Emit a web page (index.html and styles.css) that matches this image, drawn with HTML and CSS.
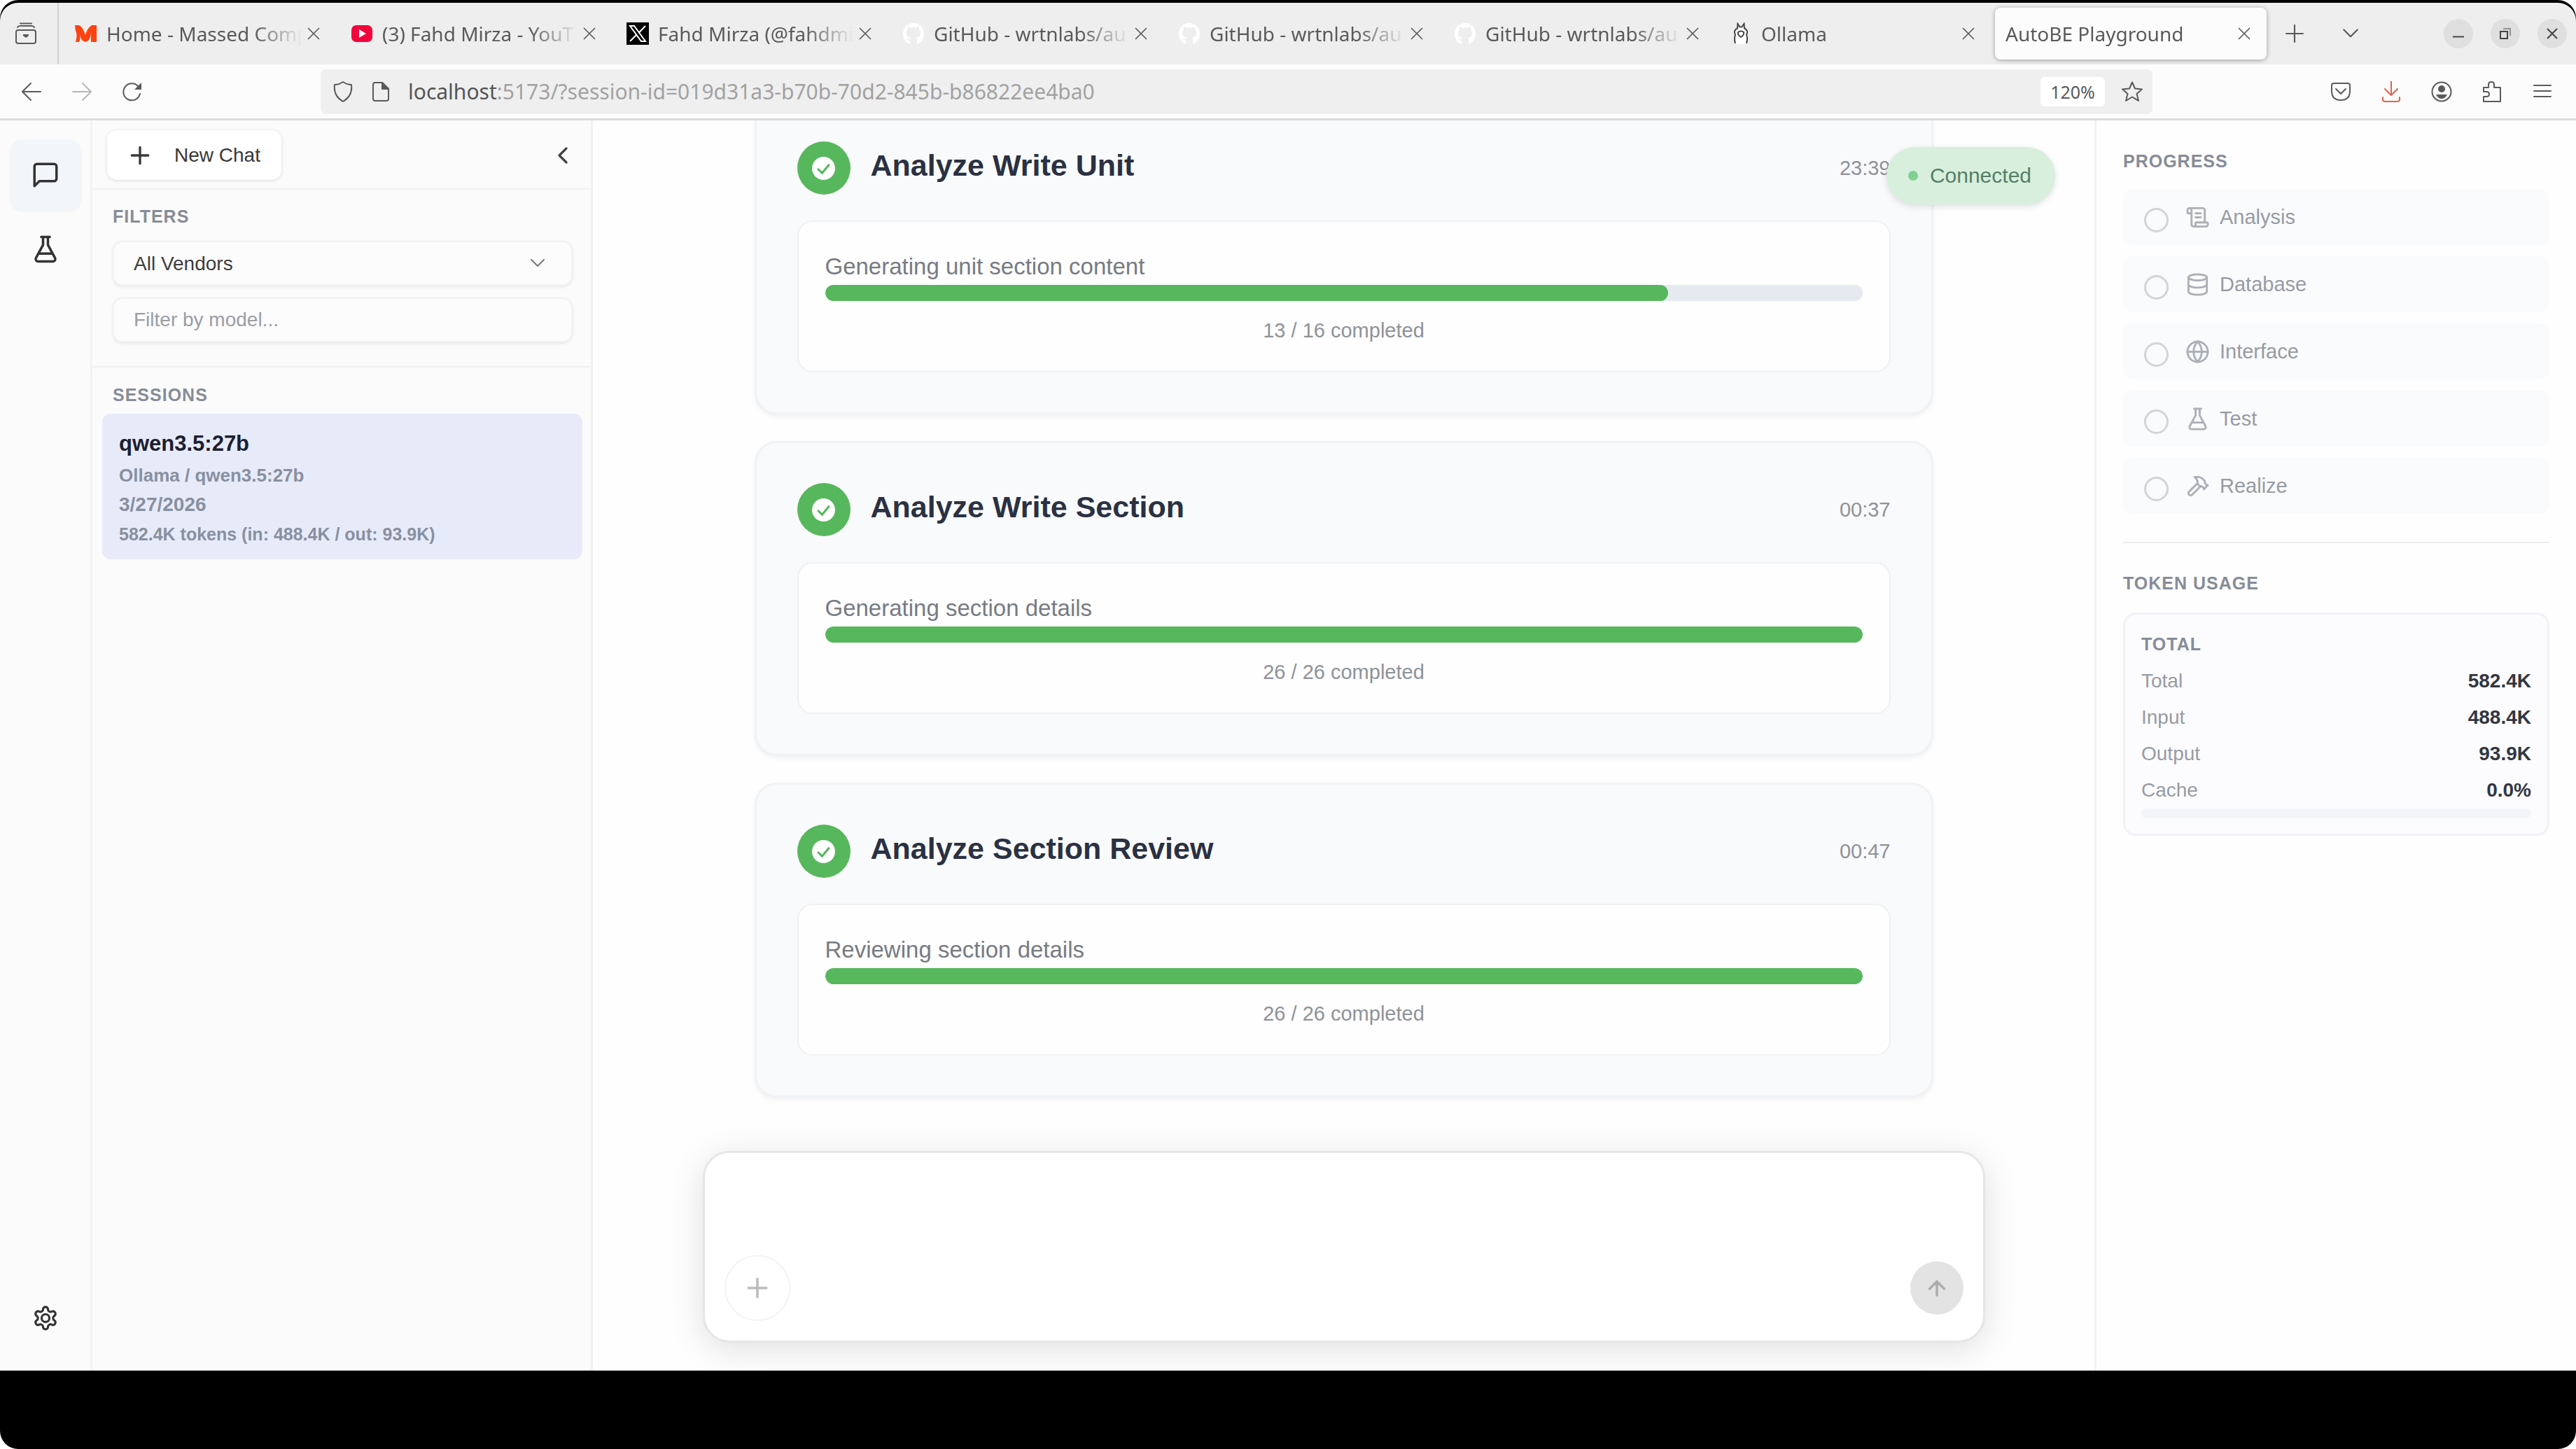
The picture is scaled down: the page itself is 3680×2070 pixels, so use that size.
FILE: index.html
```html
<!DOCTYPE html>
<html lang="en">
<head>
  <meta charset="UTF-8" />
  <meta name="viewport" content="width=device-width, initial-scale=1.0" />
  <title>AutoBE Playground</title>
  <link rel="stylesheet" href="styles.css">
</head>
<body>
  <!-- shared icons -->
  <svg class="sprite" aria-hidden="true">
    <symbol id="i-x" viewBox="0 0 24 24"><path d="M3 3l18 18M21 3L3 21" /></symbol>
    <symbol id="i-plus" viewBox="0 0 24 24"><path d="M5 12h14M12 5v14" /></symbol>
    <symbol id="i-down" viewBox="0 0 24 24"><path d="M3 7l9 9 9-9" /></symbol>
    <symbol id="i-flask" viewBox="0 0 24 24"><path d="M10 2v6.500L4.200 19.200A1.900 1.900 0 0 0 5.900 22h12.200a1.900 1.900 0 0 0 1.700-2.800L14 8.500V2M8.500 2h7M7 15.500h10" /></symbol>
    <symbol id="i-github" viewBox="0 0 32 32"><path d="M16 1C7 1 1 8 1 16.500c0 7 4 12.500 10 14.500v-5c-4 0-3-3-5-4 3 0 3 2 5 2 .5-2 1-2 1-2-4-1-6-3-6-7 0-2 1-4 2-5-.5-1-.5-3 0-4 2 0 3 1 4 2a13 13 0 0 1 8 0c1-1 2-2 4-2 .5 1 .5 3 0 4 1 1 2 3 2 5 0 4-2 6-6 7 1 1 1 2 1 4v5c6-2 10-7.500 10-14.500C31 8 25 1 16 1z" /></symbol>
    <symbol id="i-done" viewBox="0 0 32 32"><circle cx="16" cy="16" r="16" fill="#fff" /><path d="M8 16.500l6 6 10-12" fill="none" stroke="#57b75c" stroke-width="3" /></symbol>
  </svg>

  <header class="browser">
    <div class="tab-bar">
      <button class="recent" aria-label="Recent tabs">
        <svg class="icon" viewBox="0 0 32 32"><path d="M2 14a3 3 0 0 1 3-3h22a3 3 0 0 1 3 3v13a3 3 0 0 1-3 3H5a3 3 0 0 1-3-3zM4 7q1-2 4-2h16q3 0 4 2M8 1.500h16" /><path d="M12 17h8v2l-4 3-4-3z" fill="currentColor" stroke="none" /></svg>
      </button>
      <nav class="tabs">
        <div class="tab">
          <svg class="favicon" viewBox="0 0 32 32"><path d="M0 4h6q5 2 9 14 2-9 9-14h7v24h-8V15q-1 11-7 13-8-1-9-11 1 8-1 11H1q3-11 0-16z" fill="#ff4310" /></svg>
          <span class="tab-title">Home - Massed Comp</span>
          <button class="tab-close" aria-label="Close tab"><svg class="icon"><use href="#i-x" /></svg></button>
        </div>
        <div class="tab">
          <svg class="favicon" viewBox="0 0 32 32"><rect x="1" y="4" width="30" height="24" rx="7" fill="#f2033b" /><path d="M12 10l10 6-10 6z" fill="#fff" /></svg>
          <span class="tab-title">(3) Fahd Mirza - YouT</span>
          <button class="tab-close" aria-label="Close tab"><svg class="icon"><use href="#i-x" /></svg></button>
        </div>
        <div class="tab">
          <svg class="favicon" viewBox="0 0 32 32"><path d="M0 0h32v32H0z" fill="#000" /><path d="M5 5h6l16 22h-6zM27 5L17.500 15M14 18l-9 9" fill="none" stroke="#fff" stroke-width="2" /></svg>
          <span class="tab-title">Fahd Mirza (@fahdmi</span>
          <button class="tab-close" aria-label="Close tab"><svg class="icon"><use href="#i-x" /></svg></button>
        </div>
        <div class="tab">
          <svg class="favicon white"><use href="#i-github" /></svg>
          <span class="tab-title">GitHub - wrtnlabs/au</span>
          <button class="tab-close" aria-label="Close tab"><svg class="icon"><use href="#i-x" /></svg></button>
        </div>
        <div class="tab">
          <svg class="favicon white"><use href="#i-github" /></svg>
          <span class="tab-title">GitHub - wrtnlabs/au</span>
          <button class="tab-close" aria-label="Close tab"><svg class="icon"><use href="#i-x" /></svg></button>
        </div>
        <div class="tab">
          <svg class="favicon white"><use href="#i-github" /></svg>
          <span class="tab-title">GitHub - wrtnlabs/au</span>
          <button class="tab-close" aria-label="Close tab"><svg class="icon"><use href="#i-x" /></svg></button>
        </div>
        <div class="tab">
          <svg class="favicon" viewBox="0 0 32 32"><path d="M8 31q-3-8 0-13-3-7 3-10l1-7 3 5h3l3-5 1 7q5 3 2 10 3 5 0 13z" fill="#fff" /><path d="M8 30q-2-7 0-12-3-7 3-9.500L11.500 2l3 4.500h3l3-4.500.5 6.500q6 2.500 3 9.500 2 5 0 12M12 14q4-3 8 0 1 4-4 7-5-3-4-7z" fill="none" stroke="#444" stroke-width="2" /></svg>
          <span class="tab-title">Ollama</span>
          <button class="tab-close" aria-label="Close tab"><svg class="icon"><use href="#i-x" /></svg></button>
        </div>
        <div class="tab active">
          <span class="tab-title">AutoBE Playground</span>
          <button class="tab-close" aria-label="Close tab"><svg class="icon"><use href="#i-x" /></svg></button>
        </div>
      </nav>
      <button class="tab-tool" aria-label="New tab"><svg class="icon" viewBox="0 0 24 24"><path d="M1 12h22M12 1v22" /></svg></button>
      <button class="tab-tool" aria-label="List all tabs"><svg class="icon"><use href="#i-down" /></svg></button>
      <div class="window-buttons">
        <button aria-label="Minimize"><svg viewBox="0 0 16 16"><path d="M0 12.500h16" /></svg></button>
        <button aria-label="Restore"><svg viewBox="0 0 16 16"><path d="M1 5h10v10H1z" /><path d="M5 1h10v10" opacity=".5" /></svg></button>
        <button aria-label="Close"><svg viewBox="0 0 16 16"><path d="M1 1l14 14M15 1L1 15" /></svg></button>
      </div>
    </div>

    <div class="nav-bar">
      <div class="nav-buttons">
        <button aria-label="Back"><svg class="icon" viewBox="0 0 28 28"><path d="M1 14h26M13 2L1 14l12 12" /></svg></button>
        <button aria-label="Forward" disabled><svg class="icon" viewBox="0 0 28 28"><path d="M1 14h26M15 2l12 12-12 12" /></svg></button>
        <button aria-label="Reload"><svg class="icon" viewBox="0 0 28 28"><path d="M25 17a12 12 0 1 1-3-11l3 3" /><path d="M27 1v10H17z" fill="currentColor" stroke="none" /></svg></button>
      </div>
      <div class="url-bar">
        <svg class="icon" viewBox="0 0 30 30"><path d="M15 1q6 4 12 4 2 16-12 24Q1 21 3 5q6 0 12-4z" /></svg>
        <svg class="icon" viewBox="0 0 30 30"><path d="M4 5a3 3 0 0 1 3-3h10l9 9v14a3 3 0 0 1-3 3H7a3 3 0 0 1-3-3z" /><path d="M17 2l9 9h-9z" fill="currentColor" /></svg>
        <a class="url" href="#"><b>localhost</b>:5173/?session-id=019d31a3-b70b-70d2-845b-b86822ee4ba0</a>
        <button class="zoom">120%</button>
        <button class="star" aria-label="Bookmark"><svg class="icon" viewBox="0 0 30 30"><path d="M15 1.500l4 9 10 1-7.500 6.500L24 28l-9-5.500L6 28l2.500-10L1 11.500l10-1z" /></svg></button>
      </div>
      <div class="nav-tools">
        <button aria-label="Pocket"><svg class="icon" viewBox="0 0 30 30"><path d="M5 3h20q3 0 3 3v8q0 13-13 13T2 14V6q0-3 3-3zM8 11l7 7 7-7" /></svg></button>
        <button class="download" aria-label="Downloads"><svg class="icon" viewBox="0 0 30 30"><path d="M15 0v20M6 11l9 9 9-9M3 23v3q0 3 3 3h18q3 0 3-3v-3" /></svg></button>
        <button aria-label="Account"><svg class="icon" viewBox="0 0 30 30"><circle cx="15" cy="15" r="13.500" /><circle cx="15" cy="11" r="5" fill="currentColor" stroke="none" /><path d="M7 19h16q-3 6-8 6t-8-6z" fill="currentColor" stroke="none" /></svg></button>
        <button aria-label="Extensions"><svg class="icon" viewBox="0 0 30 30"><path d="M3 9h7V5q0-4 4-4t4 4v4h9v20H3v-7h4q4 0 4-3.500T7 15H3z" /></svg></button>
        <button aria-label="Menu"><svg class="icon" viewBox="0 0 30 30"><path d="M3 6h24M3 14h24M3 22h24" /></svg></button>
      </div>
    </div>
  </header>

  <div class="app">
    <nav class="rail">
      <button class="rail-button active" aria-label="Chat"><svg class="icon" viewBox="0 0 24 24"><path d="M21 15a2 2 0 0 1-2 2H7l-4 4V5a2 2 0 0 1 2-2h14a2 2 0 0 1 2 2z" /></svg></button>
      <button class="rail-button" aria-label="Lab"><svg class="icon"><use href="#i-flask" /></svg></button>
      <button class="rail-button settings" aria-label="Settings"><svg class="icon" viewBox="0 0 24 24"><path d="M12.220 2h-.44a2 2 0 0 0-2 2v.18a2 2 0 0 1-1 1.730l-.43.25a2 2 0 0 1-2 0l-.15-.08a2 2 0 0 0-2.730.73l-.22.38a2 2 0 0 0 .73 2.730l.15.1a2 2 0 0 1 1 1.720v.51a2 2 0 0 1-1 1.740l-.15.09a2 2 0 0 0-.73 2.730l.22.38a2 2 0 0 0 2.730.73l.15-.08a2 2 0 0 1 2 0l.43.25a2 2 0 0 1 1 1.730V20a2 2 0 0 0 2 2h.44a2 2 0 0 0 2-2v-.18a2 2 0 0 1 1-1.730l.43-.25a2 2 0 0 1 2 0l.15.08a2 2 0 0 0 2.730-.73l.22-.39a2 2 0 0 0-.73-2.730l-.15-.08a2 2 0 0 1-1-1.740v-.5a2 2 0 0 1 1-1.740l.15-.09a2 2 0 0 0 .73-2.730l-.22-.38a2 2 0 0 0-2.730-.73l-.15.08a2 2 0 0 1-2 0l-.43-.25a2 2 0 0 1-1-1.730V4a2 2 0 0 0-2-2z" /><circle cx="12" cy="12" r="3.500" /></svg></button>
    </nav>

    <aside class="sidebar">
      <div class="sidebar-head">
        <button class="new-chat"><svg class="icon"><use href="#i-plus" /></svg>New Chat</button>
        <button class="collapse" aria-label="Collapse sidebar"><svg class="icon" viewBox="0 0 24 24"><path d="M15 6l-6 6 6 6" /></svg></button>
      </div>
      <section class="filters">
        <h2 class="label">FILTERS</h2>
        <div class="select-wrap">
          <select class="field" aria-label="Vendor">
            <option>All Vendors</option>
          </select>
          <svg class="icon"><use href="#i-down" /></svg>
        </div>
        <input class="field" type="text" placeholder="Filter by model..." aria-label="Filter by model" />
      </section>
      <section class="sessions">
        <h2 class="label">SESSIONS</h2>
        <a class="session" href="#">
          <span class="session-title">qwen3.5:27b</span>
          <span class="session-model">Ollama / qwen3.5:27b</span>
          <span class="session-date">3/27/2026</span>
          <span class="session-tokens">582.4K tokens (in: 488.4K / out: 93.9K)</span>
        </a>
      </section>
    </aside>

    <main class="chat">
      <div class="messages">
        <article class="card">
          <div class="card-head">
            <span class="badge-done"><svg><use href="#i-done" /></svg></span>
            <h3>Analyze Write Unit</h3>
            <time>23:39</time>
          </div>
          <div class="card-body">
            <p class="task">Generating unit section content</p>
            <div class="bar"><div class="bar-fill" style="width: 81.25%"></div></div>
            <p class="count">13 / 16 completed</p>
          </div>
        </article>
        <article class="card">
          <div class="card-head">
            <span class="badge-done"><svg><use href="#i-done" /></svg></span>
            <h3>Analyze Write Section</h3>
            <time>00:37</time>
          </div>
          <div class="card-body">
            <p class="task">Generating section details</p>
            <div class="bar"><div class="bar-fill" style="width: 100%"></div></div>
            <p class="count">26 / 26 completed</p>
          </div>
        </article>
        <article class="card">
          <div class="card-head">
            <span class="badge-done"><svg><use href="#i-done" /></svg></span>
            <h3>Analyze Section Review</h3>
            <time>00:47</time>
          </div>
          <div class="card-body">
            <p class="task">Reviewing section details</p>
            <div class="bar"><div class="bar-fill" style="width: 100%"></div></div>
            <p class="count">26 / 26 completed</p>
          </div>
        </article>
      </div>

      <form class="composer">
        <textarea aria-label="Message"></textarea>
        <div class="composer-actions">
          <button class="attach" type="button" aria-label="Attach"><svg class="icon"><use href="#i-plus" /></svg></button>
          <button class="send" type="submit" aria-label="Send" disabled><svg class="icon" viewBox="0 0 24 24"><path d="M12 21V4M3 13l9-9 9 9" /></svg></button>
        </div>
      </form>

      <div class="status"><span class="status-dot"></span>Connected</div>
    </main>

    <aside class="panel">
      <section>
        <h2 class="label">PROGRESS</h2>
        <ul class="steps">
          <li><span class="step-dot"></span><svg class="icon" viewBox="0 0 24 24"><path d="M15 12h-5M15 8h-5M19 17V5a2 2 0 0 0-2-2H4" /><path d="M8 21h12a2 2 0 0 0 2-2v-1a1 1 0 0 0-1-1H11a1 1 0 0 0-1 1v1a2 2 0 1 1-4 0V5a2 2 0 1 0-4 0v2a1 1 0 0 0 1 1h3" /></svg>Analysis</li>
          <li><span class="step-dot"></span><svg class="icon" viewBox="0 0 24 24"><ellipse cx="12" cy="5" rx="9" ry="3" /><path d="M3 5v14a9 3 0 0 0 18 0V5M3 12a9 3 0 0 0 18 0" /></svg>Database</li>
          <li><span class="step-dot"></span><svg class="icon" viewBox="0 0 24 24"><circle cx="12" cy="12" r="10" /><path d="M12 2a14.500 14.500 0 0 0 0 20 14.500 14.500 0 0 0 0-20M2 12h20" /></svg>Interface</li>
          <li><span class="step-dot"></span><svg class="icon"><use href="#i-flask" /></svg>Test</li>
          <li><span class="step-dot"></span><svg class="icon" viewBox="0 0 24 24"><path d="M15 12l-8.400 8.400a2.100 2.100 0 1 1-3-3L12 9M18 15l4-4" /><path d="M21.500 11.500l-1.900-1.900A2 2 0 0 1 19 8.200V7l-2.300-2.300A6 6 0 0 0 12.500 3H9l.9.8A6.200 6.200 0 0 1 12 8.400V10l2 2h1.200a2 2 0 0 1 1.400.6l1.900 1.900" /></svg>Realize</li>
        </ul>
      </section>
      <section class="usage">
        <h2 class="label">TOKEN USAGE</h2>
        <div class="usage-box">
          <h3 class="label">TOTAL</h3>
          <table>
            <tbody>
              <tr><th scope="row">Total</th><td>582.4K</td></tr>
              <tr><th scope="row">Input</th><td>488.4K</td></tr>
              <tr><th scope="row">Output</th><td>93.9K</td></tr>
              <tr><th scope="row">Cache</th><td>0.0%</td></tr>
            </tbody>
          </table>
          <div class="cache-bar"></div>
        </div>
      </section>
    </aside>
  </div>
</body>
</html>
```

FILE: styles.css
```css
* {
  box-sizing: border-box;
}
html {
  background-color: #fff;
}
body {
  margin: 0;
  height: 100vh;
  display: flex;
  flex-direction: column;
  padding: 4px 0 112px;
  border-radius: 26px;
  overflow: hidden;
  background-color: #000;
  font-family: "Liberation Sans", Arial, sans-serif;
  font-size: 28px;
  color: #2b3040;
}
h2, h3, p, ul {
  margin: 0;
  padding: 0;
}
button {
  display: flex;
  align-items: center;
  justify-content: center;
  flex: none;
  padding: 0;
  border: none;
  background: none;
  color: inherit;
  font: inherit;
  cursor: pointer;
}
a {
  color: inherit;
  text-decoration: none;
}
.sprite {
  display: none;
}
.icon {
  flex: none;
  fill: none;
  stroke: currentColor;
  stroke-width: 2;
  stroke-linecap: round;
  stroke-linejoin: round;
}

/* browser chrome */
.browser {
  flex: none;
  font-family: "Noto Sans", sans-serif;
  color: #5a5a5a;
}
.tab-bar {
  display: flex;
  align-items: center;
  height: 88px;
  background-color: #eeeeee;
  border-radius: 26px 26px 0 0;
}
.recent {
  width: 84px;
  height: 88px;
  padding-right: 8px;
  border-right: 2px solid #d2d2d2;
}
.recent .icon {
  width: 32px;
  height: 32px;
}
.tabs {
  display: flex;
  flex: 1;
  min-width: 0;
  gap: 6px;
  padding-left: 8px;
}
.tab {
  display: flex;
  align-items: center;
  flex: 1 1 0;
  min-width: 0;
  height: 74px;
  padding: 0 22px 0 15px;
}
.tab.active {
  background-color: #fcfcfc;
  border-radius: 8px;
  box-shadow: 0 1px 6px rgba(0, 0, 0, 0.35);
}
.favicon {
  flex: none;
  width: 32px;
  height: 32px;
  margin-right: 13px;
}
.favicon.white {
  fill: #fff;
}
.tab-title {
  flex: 1;
  overflow: hidden;
  white-space: nowrap;
  margin-right: 6px;
  mask-image: linear-gradient(to right, #000 calc(100% - 70px), transparent);
}
.tab-close .icon {
  width: 20px;
  height: 20px;
}
.tab-tool {
  width: 80px;
  height: 74px;
}
.tab-tool .icon {
  width: 26px;
  height: 26px;
}
.window-buttons {
  display: flex;
  gap: 25px;
  margin-left: 93px;
  padding-right: 13px;
}
.window-buttons button {
  width: 42px;
  height: 42px;
  border-radius: 50%;
  background-color: #dfdfdf;
}
.window-buttons svg {
  width: 16px;
  height: 16px;
  fill: none;
  stroke: #444;
  stroke-width: 2;
}
.nav-bar {
  display: flex;
  align-items: center;
  height: 80px;
  background-color: #fcfcfc;
  border-bottom: 3px solid #dcdcdc;
}
.nav-buttons, .nav-tools {
  display: flex;
}
.nav-buttons {
  width: 458px;
  padding-left: 9px;
}
.nav-buttons button {
  width: 72px;
}
.nav-buttons button:disabled {
  color: #b8b8b8;
}
.nav-buttons .icon {
  width: 28px;
  height: 28px;
}
.url-bar {
  display: flex;
  align-items: center;
  flex: 1;
  height: 64px;
  padding: 0 14px 0 17px;
  gap: 24px;
  border-radius: 8px;
  background-color: #efefef;
}
.url-bar .icon, .nav-tools .icon {
  width: 30px;
  height: 30px;
}
.url {
  flex: 1;
  font-size: 30px;
  color: #a2a2a2;
}
.url b {
  font-weight: normal;
  color: #555;
}
.zoom {
  width: 92px;
  height: 42px;
  border-radius: 6px;
  background-color: #fff;
  font-size: 25px;
}
.nav-tools {
  padding: 0 12px 0 233px;
}
.nav-tools button {
  width: 72px;
}
.nav-tools .download {
  color: #e2614a;
}

/* app */
.app {
  flex: 1;
  min-height: 0;
  display: grid;
  grid-template-columns: 132px 715px 1fr 688px;
  background-color: #fefefe;
}
.label {
  font-size: 25px;
  line-height: 30px;
  letter-spacing: 1px;
  font-weight: bold;
  color: #878c98;
}
.rail {
  display: flex;
  flex-direction: column;
  align-items: center;
  gap: 6px;
  padding: 28px 0 25px;
  border-right: 3px solid #f3f3f4;
  background-color: #fbfbfb;
  color: #333;
}
.rail-button {
  width: 100px;
  height: 100px;
  border-radius: 16px;
}
.rail-button.active {
  background-color: #f2f6fa;
  box-shadow: 0 1px 4px rgba(0, 0, 0, 0.06);
}
.rail-button .icon {
  width: 42px;
  height: 42px;
}
.rail-button.settings {
  margin-top: auto;
}
.settings .icon {
  width: 38px;
  height: 38px;
}

.sidebar {
  background-color: #fbfbfb;
  border-right: 3px solid #f1f1f2;
}
.sidebar-head {
  display: flex;
  align-items: center;
  justify-content: space-between;
  padding: 14px 20px 12px 21px;
  border-bottom: 2px solid #f0f0f1;
}
.new-chat {
  height: 71px;
  gap: 29px;
  padding: 0 30px 0 27px;
  border-radius: 14px;
  background-color: #fff;
  box-shadow: 0 1px 5px rgba(0, 0, 0, 0.13);
  color: #383838;
}
.new-chat .icon {
  width: 40px;
  height: 40px;
}
.collapse .icon {
  width: 40px;
  height: 40px;
  color: #444;
}
.filters {
  display: flex;
  flex-direction: column;
  padding: 23px 26px 34px 29px;
  border-bottom: 2px solid #efeff0;
}
.filters .label {
  margin-bottom: 20px;
}
.field {
  display: block;
  width: 100%;
  height: 64px;
  padding: 0 28px;
  border: 2px solid #f2f2f2;
  border-radius: 14px;
  background-color: #fcfcfc;
  box-shadow: 0 2px 4px rgba(0, 0, 0, 0.08);
  color: #3c3c3c;
  font: inherit;
  appearance: none;
}
.field::placeholder {
  color: #9a9da5;
  opacity: 1;
}
.select-wrap {
  position: relative;
  margin-bottom: 17px;
}
.select-wrap .icon {
  position: absolute;
  right: 38px;
  top: 20px;
  width: 24px;
  height: 24px;
  color: #777;
  pointer-events: none;
}
.sessions {
  padding: 24px 12px 0 14px;
}
.sessions .label {
  margin: 0 0 12px 15px;
}
.session {
  display: flex;
  flex-direction: column;
  gap: 8px;
  padding: 23px 24px 19px;
  border-radius: 12px;
  background-color: #e7ebf9;
  font-weight: bold;
  line-height: 34px;
  color: #8890a0;
}
.session-title {
  font-size: 31px;
  line-height: 40px;
  color: #1c2030;
}
.session-model {
  font-size: 26px;
}
.session-tokens {
  font-size: 25px;
}

.chat {
  position: relative;
  display: flex;
  flex-direction: column;
  align-items: center;
  min-width: 0;
  min-height: 0;
  padding-bottom: 40px;
  overflow: hidden;
}
.messages {
  flex: 1;
  min-height: 0;
  width: 100%;
  display: flex;
  flex-direction: column;
  justify-content: flex-end;
  align-items: center;
  gap: 38px;
  padding-bottom: 76px;
  overflow: hidden;
}
.card {
  flex: none;
  width: 79%;
  max-width: 1684px;
  padding: 57px 58px 57px;
  border: 3px solid #f0f2f4;
  border-radius: 32px;
  background-color: #f9fafc;
  box-shadow: 0 3px 6px rgba(0, 0, 0, 0.06);
}
.card-head {
  display: flex;
  align-items: center;
  margin-bottom: 37px;
}
.badge-done {
  display: grid;
  place-items: center;
  width: 76px;
  height: 76px;
  margin-right: 29px;
  border-radius: 50%;
  background-color: #57b75c;
}
.badge-done svg {
  width: 33px;
  height: 33px;
}
.card h3 {
  flex: 1;
  padding-bottom: 8px;
  font-size: 43px;
  line-height: 50px;
  color: #2a3142;
}
.card time {
  font-size: 29px;
  color: #8e9299;
}
.card-body {
  padding: 43px 38px 39px;
  border: 2px solid #f0f1f3;
  border-radius: 22px;
  background-color: #fefefe;
}
.task {
  font-size: 33px;
  line-height: 42px;
  color: #777b82;
}
.bar {
  height: 23px;
  margin: 5px 0 23px;
  border-radius: 12px;
  background-color: #e5e9f0;
  overflow: hidden;
}
.bar-fill {
  height: 100%;
  border-radius: 12px;
  background-color: #57b75c;
}
.count {
  font-size: 29px;
  line-height: 38px;
  text-align: center;
  color: #8e9299;
}

.composer {
  flex: none;
  display: flex;
  flex-direction: column;
  width: 86%;
  max-width: 1832px;
  padding: 28px 28px 28px;
  border: 3px solid #e6e6e6;
  border-radius: 38px;
  background-color: #fff;
  box-shadow: 0 10px 50px rgba(0, 0, 0, 0.12);
}
.composer textarea {
  height: 118px;
  padding: 0;
  border: none;
  outline: none;
  resize: none;
  background: none;
  font: inherit;
}
.composer-actions {
  display: flex;
  align-items: center;
  justify-content: space-between;
}
.attach {
  width: 94px;
  height: 94px;
  border: 2px solid #f3f3f3;
  border-radius: 50%;
  color: #bcbcbc;
}
.attach .icon {
  width: 44px;
  height: 44px;
}
.send {
  width: 76px;
  height: 76px;
  border-radius: 50%;
  background-color: #e3e3e3;
  color: #acacac;
}
.send .icon {
  width: 28px;
  height: 28px;
  stroke-width: 3;
}
.status {
  position: absolute;
  top: 38px;
  right: 56px;
  display: flex;
  align-items: center;
  gap: 17px;
  height: 82px;
  padding: 0 34px 0 31px;
  border-radius: 41px;
  background-color: #d8efde;
  box-shadow: 0 3px 10px rgba(0, 0, 0, 0.12);
  font-size: 30px;
  color: #557f66;
}
.status-dot {
  width: 14px;
  height: 14px;
  border-radius: 50%;
  background-color: #80d090;
}

.panel {
  padding: 43px 38px 0;
  border-left: 3px solid #f1f1f3;
}
.steps {
  display: flex;
  flex-direction: column;
  gap: 16px;
  margin: 25px 0 40px;
  list-style: none;
}
.steps li {
  display: flex;
  align-items: center;
  height: 80px;
  padding: 0 30px;
  border-radius: 14px;
  background-color: #fafbfd;
  font-size: 29px;
  color: #979ba4;
}
.step-dot {
  width: 35px;
  height: 35px;
  margin: 8px 24px 0 0;
  border: 3px solid #d3d4d8;
  border-radius: 50%;
}
.steps .icon {
  width: 35px;
  height: 35px;
  margin-right: 14px;
  color: #adb0b7;
}
.usage {
  padding-top: 42px;
  border-top: 2px solid #ededf0;
}
.usage-box {
  margin-top: 27px;
  padding: 27px 23px 22px;
  border: 3px solid #f1f2f5;
  border-radius: 18px;
  background-color: #fcfcfe;
}
.usage-box table {
  width: 100%;
  margin-top: 12px;
  border-collapse: collapse;
}
.usage-box th, .usage-box td {
  height: 52px;
  padding: 0;
}
.usage-box th {
  font-weight: normal;
  text-align: left;
  color: #979ba4;
}
.usage-box td {
  font-weight: bold;
  text-align: right;
  color: #333641;
}
.cache-bar {
  height: 14px;
  border-radius: 7px;
  background-color: #f3f5f8;
}
```
